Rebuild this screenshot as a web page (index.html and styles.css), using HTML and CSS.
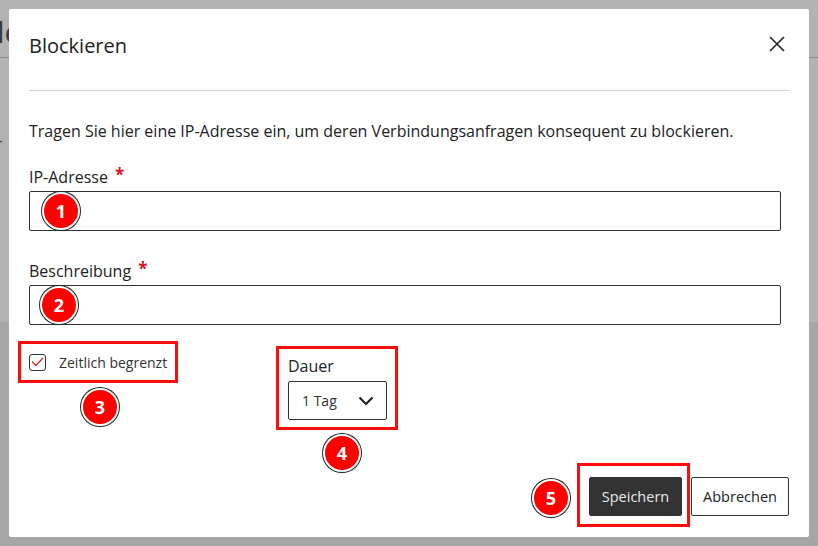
FILE: index.html
```html
<!DOCTYPE html>
<html lang="de">
<head>
  <meta charset="UTF-8" />
  <meta name="viewport" content="width=device-width, initial-scale=1.0"/>
  <title>Blockieren</title>
  <link rel="stylesheet" href="styles.css">
</head>
<body>

  <!-- Seite im Hintergrund (vom Overlay abgedunkelt) -->
  <div class="page">
    <div class="page-head">
      <span class="page-title">Tabelle</span>
    </div>
    <div class="page-body">
      <p class="page-line first">Vor</p>
      <p class="page-line second">Url</p>
    </div>
    <div class="page-foot"></div>
  </div>

  <!-- Dialog -->
  <div class="modal">
    <div class="modal-header">
      <h2>Blockieren</h2>
      <button class="close" aria-label="Schließen">
        <svg width="16" height="16" viewBox="0 0 16 16">
          <path d="M1 1 L15 15 M15 1 L1 15" stroke="#222" stroke-width="1.6" fill="none"/>
        </svg>
      </button>
    </div>

    <div class="modal-body">
      <p class="intro">Tragen Sie hier eine IP-Adresse ein, um deren Verbindungsanfragen konsequent zu blockieren.</p>

      <div class="field">
        <label>IP-Adresse <span class="req">*</span></label>
        <div class="input-wrap">
          <input type="text">
          <span class="badge badge-1">1</span>
        </div>
      </div>

      <div class="field">
        <label>Beschreibung <span class="req">*</span></label>
        <div class="input-wrap">
          <input type="text">
          <span class="badge badge-2">2</span>
        </div>
      </div>

      <div class="options">
        <div class="mark mark-check">
          <span class="checkbox">
            <svg width="13" height="10" viewBox="0 0 13 10">
              <path d="M1 4.5 L4.8 8.5 L12 1" stroke="#e0262e" stroke-width="1.3" fill="none"/>
            </svg>
          </span>
          <span class="check-label">Zeitlich begrenzt</span>
          <span class="badge badge-3">3</span>
        </div>

        <div class="mark mark-duration">
          <div class="duration-label">Dauer</div>
          <div class="select">
            <span>1 Tag</span>
            <svg width="16" height="10" viewBox="0 0 16 10">
              <path d="M1.5 1.5 L8 8 L14.5 1.5" stroke="#222" stroke-width="2.2" fill="none"/>
            </svg>
          </div>
          <span class="badge badge-4">4</span>
        </div>
      </div>
    </div>

    <div class="modal-footer">
      <div class="mark mark-save">
        <button class="btn btn-primary">Speichern</button>
        <span class="badge badge-5">5</span>
      </div>
      <button class="btn btn-secondary">Abbrechen</button>
    </div>
  </div>

</body>
</html>
```

FILE: styles.css
```css
* {
  margin: 0;
  padding: 0;
  box-sizing: border-box;
}

body {
  width: 818px;
  height: 546px;
  overflow: hidden;
  font-family: "Open Sans", "Noto Sans", sans-serif;
  color: #222;
  position: relative;
  background: #b2b2b2;
}

/* Hintergrundseite */
.page {
  height: 100%;
  display: flex;
  flex-direction: column;
}

.page-head {
  height: 58px;
  border-bottom: 1px solid #8c8c8c;
  display: flex;
  align-items: center;
  overflow: hidden;
}

.page-title {
  font-size: 30px;
  color: #3a3a3a;
  margin-left: -79px;
  margin-top: 6px;
}

.page-body {
  height: 264px;
  position: relative;
  overflow: hidden;
}

.page-line {
  font-size: 15px;
  color: #3a3a3a;
  margin-left: -22px;
}
.page-line.first {
  margin-top: 75px;
}
.page-line.second {
  margin-top: 94px;
}

.page-foot {
  flex: 1;
  background: #a6a6a6;
}

/* Dialog */
.modal {
  position: absolute;
  top: 9px;
  left: 9px;
  width: 800px;
  height: 528px;
  background: #fff;
  border-radius: 2px;
  padding: 0 20px;
  display: flex;
  flex-direction: column;
}

.modal-header {
  display: flex;
  justify-content: space-between;
  align-items: flex-start;
  padding-top: 23px;
  padding-bottom: 30px;
  border-bottom: 1px solid #d0d0d0;
}

.modal-header h2 {
  font-size: 20px;
  font-weight: 400;
  line-height: 28px;
  color: #222;
}

.close {
  border: none;
  background: none;
  margin-top: 4px;
  margin-right: 4px;
  width: 16px;
  height: 16px;
}

.modal-body {
  padding-top: 29px;
}

.intro {
  font-size: 16px;
  line-height: 22px;
  color: #222;
}

.field {
  margin-top: 22px;
}
.field + .field {
  margin-top: 27px;
}

.field label {
  display: block;
  font-size: 16px;
  line-height: 22px;
  margin-bottom: 3px;
}

.req {
  color: #d8121b;
  font-weight: 700;
  font-size: 17px;
  margin-left: 3px;
  vertical-align: 2px;
}

.input-wrap {
  position: relative;
  width: calc(100% - 8px);
}

.input-wrap input {
  display: block;
  width: 100%;
  height: 40px;
  border: 1px solid #333;
  border-radius: 2px;
  font-family: inherit;
  font-size: 15px;
}

/* Markierungen (rote Rahmen) */
.mark {
  position: relative;
  border: 3px solid #ff0b0b;
}

.options {
  display: flex;
  align-items: flex-start;
  margin-top: 16px;
  margin-left: -11px;
}

.mark-check {
  width: 160px;
  height: 42px;
  display: flex;
  align-items: center;
  padding-left: 8px;
}

.checkbox {
  width: 17px;
  height: 17px;
  border: 1px solid #333;
  border-radius: 3px;
  display: flex;
  align-items: center;
  justify-content: center;
}

.check-label {
  font-size: 14px;
  margin-left: 13px;
  color: #333;
}

.mark-duration {
  width: 122px;
  height: 84px;
  margin-left: 98px;
  margin-top: 5px;
  padding: 6px 8px 0 9px;
}

.duration-label {
  font-size: 16px;
  line-height: 22px;
}

.select {
  margin-top: 4px;
  width: 99px;
  height: 39px;
  border: 1px solid #333;
  border-radius: 2px;
  display: flex;
  align-items: center;
  justify-content: space-between;
  padding: 0 12px 0 13px;
  font-size: 14px;
  color: #333;
}

.modal-footer {
  margin-top: auto;
  margin-bottom: 10px;
  display: flex;
  justify-content: flex-end;
  align-items: flex-start;
}

.mark-save {
  padding: 11px 5px 8px 9px;
}

.btn {
  font-family: inherit;
  font-size: 14.5px;
  height: 39px;
  border-radius: 2px;
  border: 1px solid #333;
}

.btn-primary {
  width: 93px;
  background: #333;
  color: #e8e8e8;
}

.btn-secondary {
  width: 98px;
  background: #fff;
  color: #222;
  margin-top: 14px;
  margin-left: 1px;
}

/* Nummern-Badges */
.badge {
  position: absolute;
  width: 38px;
  height: 38px;
  border-radius: 50%;
  background: #ff0000;
  border: 2px solid #fff;
  box-shadow: 0 0 0 1px #222;
  color: #fff;
  font-weight: 700;
  font-size: 18px;
  display: flex;
  align-items: center;
  justify-content: center;
}

.badge-1 {
  left: 13px;
  top: 1px;
}
.badge-2 {
  left: 11px;
  top: 1px;
}
.badge-3 {
  left: 60px;
  top: 44px;
}
.badge-4 {
  left: 44px;
  top: 85px;
}
.badge-5 {
  left: -48px;
  top: 13px;
}
```
